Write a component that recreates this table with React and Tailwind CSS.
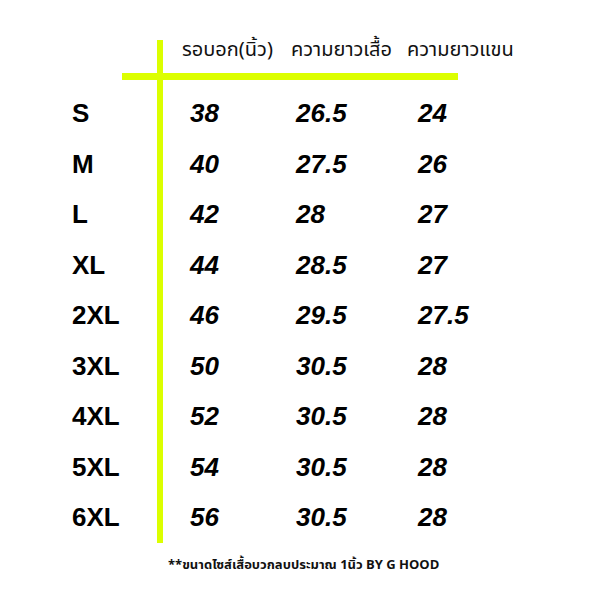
import React from "react";

const rows = [
  ["S", "38", "26.5", "24"],
  ["M", "40", "27.5", "26"],
  ["L", "42", "28", "27"],
  ["XL", "44", "28.5", "27"],
  ["2XL", "46", "29.5", "27.5"],
  ["3XL", "50", "30.5", "28"],
  ["4XL", "52", "30.5", "28"],
  ["5XL", "54", "30.5", "28"],
  ["6XL", "56", "30.5", "28"],
];

export default function App() {
  return (
    <div className="w-[592px] h-[592px] bg-white pt-[40px] text-black overflow-hidden">
      <div className="flex">
        <div className="w-[157px] shrink-0" />
        <div className="flex-1 border-l-[6px] border-[#dcff00]">
          <div
            className="h-[33px] pb-[16px] grid grid-cols-[109px_116px_auto] pl-[19px] items-center text-[20px] leading-none text-[#111] whitespace-nowrap"
            style={{ fontFamily: '"Noto Sans Thai", "Noto Sans", "DejaVu Sans", sans-serif' }}
          >
            <span>รอบอก(นิ้ว)</span>
            <span>ความยาวเสื้อ</span>
            <span>ความยาวแขน</span>
          </div>
          <div className="h-[7px] w-[336px] -ml-[41px] bg-[#dcff00]" />
          <div className="h-[8px]" />
        </div>
      </div>
      {rows.map((r) => (
        <div key={r[0]} className="flex h-[50.5px]">
          <div
            className="w-[157px] shrink-0 pl-[72px] flex items-center text-[26px] font-bold leading-none"
            style={{ fontFamily: '"Liberation Sans", Arial, sans-serif' }}
          >
            {r[0]}
          </div>
          <div
            className="flex-1 border-l-[6px] border-[#dcff00] grid grid-cols-[106px_122px_auto] pl-[27px] items-center text-[26px] font-bold italic leading-none"
            style={{ fontFamily: '"Liberation Sans", Arial, sans-serif' }}
          >
            <span>{r[1]}</span>
            <span>{r[2]}</span>
            <span>{r[3]}</span>
          </div>
        </div>
      ))}
      <div
        className="pl-[168px] pt-[16px] text-[13px] font-bold leading-none text-[#111]"
        style={{ fontFamily: '"Noto Sans Thai", "Liberation Sans", "DejaVu Sans", sans-serif' }}
      >
        **ขนาดไซส์เสื้อบวกลบประมาณ 1นิ้ว BY G HOOD
      </div>
    </div>
  );
}
